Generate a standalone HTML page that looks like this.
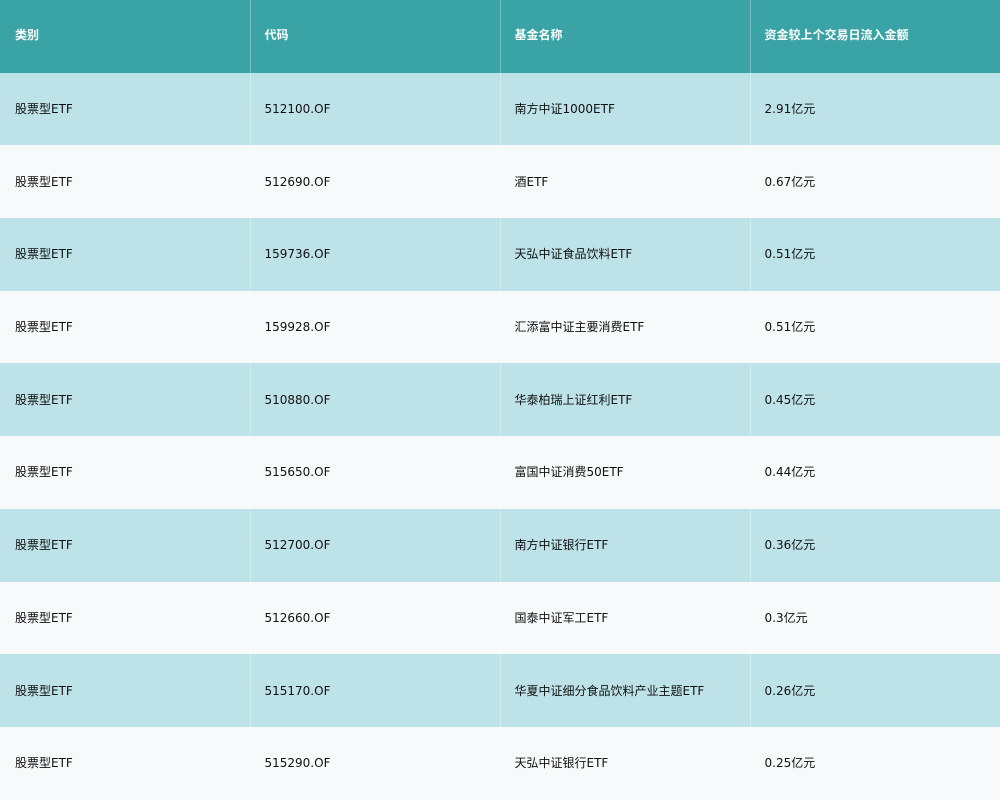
<!DOCTYPE html>
<html><head><meta charset="utf-8"><style>
body{margin:0;width:1000px;height:800px;overflow:hidden;font-family:"DejaVu Sans","Noto Sans CJK SC",sans-serif;font-size:12px;color:#111;}
table{border-collapse:collapse;width:1000px;table-layout:fixed;}
td,th{height:72.7px;padding:0 0 0 14px;line-height:16px;text-align:left;vertical-align:middle;border-left:1px solid rgba(255,255,255,.3);box-sizing:border-box;}
td:first-child,th:first-child{border-left:none;padding-left:15px}
th{background:#3aa3a6;color:#fff;font-weight:bold;height:72.7px;padding-bottom:2px}
tr:nth-child(odd) td{background:#bde3e9}
tr:nth-child(even) td{background:#f7f9fb}
</style></head><body><table>
<thead><tr><th>类别</th><th>代码</th><th>基金名称</th><th>资金较上个交易日流入金额</th></tr></thead>
<tbody>
<tr><td>股票型ETF</td><td>512100.OF</td><td>南方中证1000ETF</td><td>2.91亿元</td></tr>
<tr><td>股票型ETF</td><td>512690.OF</td><td>酒ETF</td><td>0.67亿元</td></tr>
<tr><td>股票型ETF</td><td>159736.OF</td><td>天弘中证食品饮料ETF</td><td>0.51亿元</td></tr>
<tr><td>股票型ETF</td><td>159928.OF</td><td>汇添富中证主要消费ETF</td><td>0.51亿元</td></tr>
<tr><td>股票型ETF</td><td>510880.OF</td><td>华泰柏瑞上证红利ETF</td><td>0.45亿元</td></tr>
<tr><td>股票型ETF</td><td>515650.OF</td><td>富国中证消费50ETF</td><td>0.44亿元</td></tr>
<tr><td>股票型ETF</td><td>512700.OF</td><td>南方中证银行ETF</td><td>0.36亿元</td></tr>
<tr><td>股票型ETF</td><td>512660.OF</td><td>国泰中证军工ETF</td><td>0.3亿元</td></tr>
<tr><td>股票型ETF</td><td>515170.OF</td><td>华夏中证细分食品饮料产业主题ETF</td><td>0.26亿元</td></tr>
<tr><td>股票型ETF</td><td>515290.OF</td><td>天弘中证银行ETF</td><td>0.25亿元</td></tr>
</tbody></table></body></html>
